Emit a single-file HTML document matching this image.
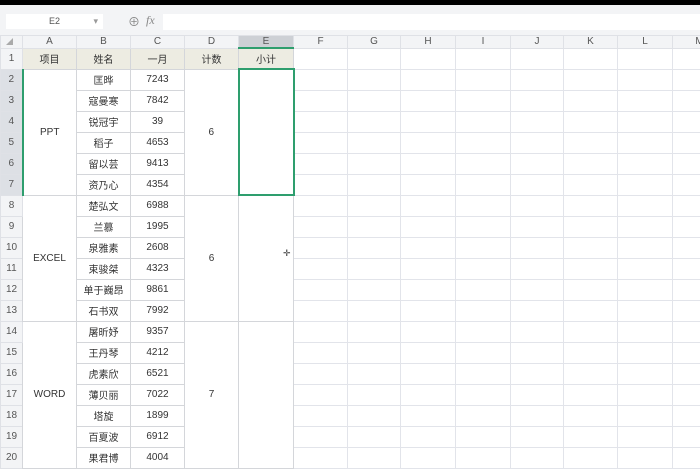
<!DOCTYPE html>
<html><head><meta charset="utf-8"><style>
*{margin:0;padding:0;box-sizing:border-box}
body{width:700px;height:459px;overflow:hidden;background:#fff;font-family:"Liberation Sans","Noto Sans CJK SC",sans-serif;font-size:10px;color:#333;position:relative}
.top{position:absolute;left:0;top:0;width:700px;height:5px;background:#000}
.tb{position:absolute;left:0;top:5px;width:700px;height:30px;background:#f3f4f6}
.nb{position:absolute;left:6px;top:14px;width:97px;height:15px;background:#fff;font-size:9px;color:#555;text-align:center;line-height:15px}
.fi{position:absolute;left:163px;top:14px;width:537px;height:16px;background:#fff}
table{position:absolute;left:0;top:35px;width:726px;border-collapse:collapse;table-layout:fixed}
td{border:1px solid #e2e4ea;height:21px;text-align:center;vertical-align:middle;white-space:nowrap;overflow:hidden;padding:0}
tr.h td{height:12px;background:#f3f4f6;color:#555;font-size:10px;border-color:#dfe1e6}
td.rh{background:#f3f4f6;color:#555;font-size:10px;border-color:#dfe1e6}
td.rs{background:#dde0e5;border-right:2px solid #2e9e6e}
td.d{border-color:#d4d6da}
tr.r1 td.b{background:#edece2}
</style></head><body>
<div class="top"></div><div class="tb"></div>
<div class="nb">E2<span style="position:absolute;right:5px;color:#999">▾</span></div>
<div style="position:absolute;left:128px;top:13px;font-size:12px;color:#888">⊕</div>
<div style="position:absolute;left:146px;top:13px;font-size:12px;color:#888;font-style:italic;font-family:'Liberation Serif',serif">fx</div>
<div class="fi"></div>
<table>
<colgroup><col style="width:22px"><col style="width:54px"><col style="width:54px"><col style="width:54px"><col style="width:54px"><col style="width:55px"><col style="width:54px"><col style="width:53px"><col style="width:55px"><col style="width:55px"><col style="width:53px"><col style="width:54px"><col style="width:55px"><col style="width:54px"></colgroup>
<tr class="h"><td></td><td>A</td><td>B</td><td>C</td><td>D</td><td style="background:#cdd0d5;border-bottom:2px solid #2e9e6e">E</td><td>F</td><td>G</td><td>H</td><td>I</td><td>J</td><td>K</td><td>L</td><td>M</td></tr>
<tr class="r1"><td class="rh">1</td><td class="b d">项目</td><td class="b d">姓名</td><td class="b d">一月</td><td class="b d">计数</td><td class="b d">小计</td><td></td><td></td><td></td><td></td><td></td><td></td><td></td><td></td></tr>
<tr><td class="rh rs">2</td><td rowspan="6" class="d">PPT</td><td class="d">匡晔</td><td class="d">7243</td><td rowspan="6" class="d">6</td><td rowspan="6" style="border:2px solid #2e9e6e"></td><td></td><td></td><td></td><td></td><td></td><td></td><td></td><td></td></tr>
<tr><td class="rh rs">3</td><td class="d">寇曼寒</td><td class="d">7842</td><td></td><td></td><td></td><td></td><td></td><td></td><td></td><td></td></tr>
<tr><td class="rh rs">4</td><td class="d">锐冠宇</td><td class="d">39</td><td></td><td></td><td></td><td></td><td></td><td></td><td></td><td></td></tr>
<tr><td class="rh rs">5</td><td class="d">稻子</td><td class="d">4653</td><td></td><td></td><td></td><td></td><td></td><td></td><td></td><td></td></tr>
<tr><td class="rh rs">6</td><td class="d">留以芸</td><td class="d">9413</td><td></td><td></td><td></td><td></td><td></td><td></td><td></td><td></td></tr>
<tr><td class="rh rs">7</td><td class="d">资乃心</td><td class="d">4354</td><td></td><td></td><td></td><td></td><td></td><td></td><td></td><td></td></tr>
<tr><td class="rh">8</td><td rowspan="6" class="d">EXCEL</td><td class="d">楚弘文</td><td class="d">6988</td><td rowspan="6" class="d">6</td><td rowspan="6" class="d"></td><td></td><td></td><td></td><td></td><td></td><td></td><td></td><td></td></tr>
<tr><td class="rh">9</td><td class="d">兰慕</td><td class="d">1995</td><td></td><td></td><td></td><td></td><td></td><td></td><td></td><td></td></tr>
<tr><td class="rh">10</td><td class="d">泉雅素</td><td class="d">2608</td><td></td><td></td><td></td><td></td><td></td><td></td><td></td><td></td></tr>
<tr><td class="rh">11</td><td class="d">束骏桀</td><td class="d">4323</td><td></td><td></td><td></td><td></td><td></td><td></td><td></td><td></td></tr>
<tr><td class="rh">12</td><td class="d">单于巍昂</td><td class="d">9861</td><td></td><td></td><td></td><td></td><td></td><td></td><td></td><td></td></tr>
<tr><td class="rh">13</td><td class="d">石书双</td><td class="d">7992</td><td></td><td></td><td></td><td></td><td></td><td></td><td></td><td></td></tr>
<tr><td class="rh">14</td><td rowspan="7" class="d">WORD</td><td class="d">屠昕妤</td><td class="d">9357</td><td rowspan="7" class="d">7</td><td rowspan="7" class="d"></td><td></td><td></td><td></td><td></td><td></td><td></td><td></td><td></td></tr>
<tr><td class="rh">15</td><td class="d">王丹琴</td><td class="d">4212</td><td></td><td></td><td></td><td></td><td></td><td></td><td></td><td></td></tr>
<tr><td class="rh">16</td><td class="d">虎素欣</td><td class="d">6521</td><td></td><td></td><td></td><td></td><td></td><td></td><td></td><td></td></tr>
<tr><td class="rh">17</td><td class="d">薄贝丽</td><td class="d">7022</td><td></td><td></td><td></td><td></td><td></td><td></td><td></td><td></td></tr>
<tr><td class="rh">18</td><td class="d">塔旋</td><td class="d">1899</td><td></td><td></td><td></td><td></td><td></td><td></td><td></td><td></td></tr>
<tr><td class="rh">19</td><td class="d">百夏波</td><td class="d">6912</td><td></td><td></td><td></td><td></td><td></td><td></td><td></td><td></td></tr>
<tr><td class="rh">20</td><td class="d">果君博</td><td class="d">4004</td><td></td><td></td><td></td><td></td><td></td><td></td><td></td><td></td></tr>
</table>
<div style="position:absolute;left:6px;top:38px;width:0;height:0;border-left:7px solid transparent;border-bottom:7px solid #aaa"></div>
<div style="position:absolute;left:283px;top:248px;font-size:9px;color:#333">✛</div>
</body></html>
